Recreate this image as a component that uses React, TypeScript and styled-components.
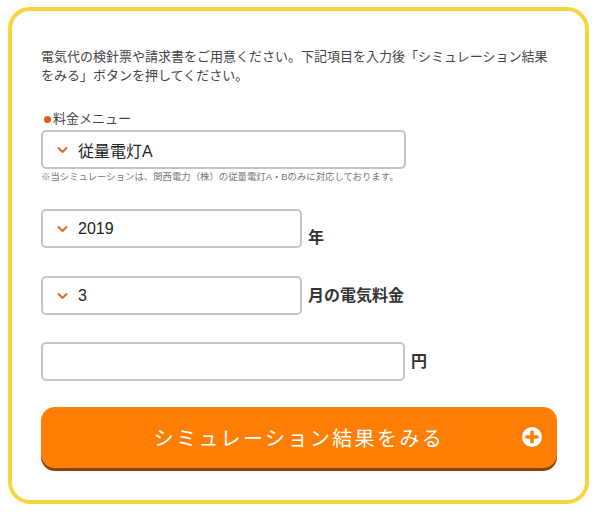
import styled, { createGlobalStyle } from 'styled-components';

const GlobalStyle = createGlobalStyle`
  html, body {
    margin: 0;
    padding: 0;
    background: #ffffff;
  }
  body {
    font-family: "Liberation Sans", "Noto Sans CJK JP", sans-serif;
    color: #333333;
  }
`;

const Frame = styled.div`
  box-sizing: border-box;
  width: 581px;
  height: 497px;
  margin: 7px 0 0 8px;
  padding: 36px 32px 0 29px;
  border: 4px solid #f6d63c;
  border-radius: 22px;
  background: #ffffff;
`;

const Intro = styled.p`
  margin: 0;
  font-size: 13px;
  line-height: 19px;
  color: #444444;
`;

const Label = styled.div`
  margin-top: 26px;
  display: flex;
  align-items: center;
  font-size: 13px;
  line-height: 16px;
  color: #444444;

  &::before {
    content: '';
    width: 7px;
    height: 7px;
    margin: 0 2px 0 3px;
    border-radius: 50%;
    background: #e8541a;
  }
`;

const Row = styled.div<{ $gap: number; $align: string }>`
  display: flex;
  align-items: ${({ $align }) => $align};
  gap: 6px;
  margin-top: ${({ $gap }) => $gap}px;
`;

const Field = styled.div<{ $width: number }>`
  box-sizing: border-box;
  width: ${({ $width }) => $width}px;
  height: 39px;
  display: flex;
  align-items: center;
  padding-left: 14px;
  border: 2px solid #c4c4c4;
  border-radius: 5px;
  background: #ffffff;
  font-size: 16px;
  color: #222222;
`;

const Chevron = styled.svg`
  width: 11px;
  height: 8px;
  margin-right: 10px;
  flex-shrink: 0;
`;

const Unit = styled.span<{ $pad?: number }>`
  font-size: 16px;
  font-weight: bold;
  color: #333333;
  padding-bottom: ${({ $pad }) => $pad || 0}px;
  line-height: 18px;
`;

const Note = styled.div`
  margin-top: 1px;
  font-size: 9.4px;
  line-height: 13px;
  color: #777777;
  white-space: nowrap;
`;

const Button = styled.button`
  position: relative;
  box-sizing: border-box;
  display: flex;
  align-items: center;
  justify-content: center;
  width: 516px;
  height: 61px;
  margin-top: 26px;
  padding: 0;
  border: none;
  border-radius: 14px;
  background: #ff7f06;
  box-shadow: 0 3px 0 #8f4206;
  color: #ffffff;
  font-family: "Noto Sans CJK JP", sans-serif;
  font-size: 20px;
  letter-spacing: 2.4px;
  cursor: pointer;
`;

const PlusIcon = styled.svg`
  position: absolute;
  right: 15px;
  top: 20px;
  width: 20px;
  height: 20px;
`;

function SelectField({ width, value }: { width: number; value: string }) {
  return (
    <Field $width={width}>
      <Chevron viewBox="0 0 11 8">
        <path d="M1.5 2 L5.5 6 L9.5 2" fill="none" stroke="#e26a2c" strokeWidth="2" strokeLinecap="round" strokeLinejoin="round" />
      </Chevron>
      {value}
    </Field>
  );
}

export default function App() {
  return (
    <>
      <GlobalStyle />
      <Frame>
        <Intro>
          電気代の検針票や請求書をご用意ください。下記項目を入力後「シミュレーション結果をみる」ボタンを押してください。
        </Intro>
        <Label>料金メニュー</Label>
        <Row $gap={3} $align="center">
          <SelectField width={365} value="従量電灯A" />
        </Row>
        <Note>※当シミュレーションは、関西電力（株）の従量電灯A・Bのみに対応しております。</Note>
        <Row $gap={26} $align="flex-end">
          <SelectField width={261} value="2019" />
          <Unit $pad={1}>年</Unit>
        </Row>
        <Row $gap={28} $align="center">
          <SelectField width={261} value="3" />
          <Unit>月の電気料金</Unit>
        </Row>
        <Row $gap={27} $align="center">
          <Field $width={364} />
          <Unit>円</Unit>
        </Row>
        <Button type="button">
          シミュレーション結果をみる
          <PlusIcon viewBox="0 0 20 20">
            <circle cx="10" cy="10" r="10" fill="#ffffff" />
            <path d="M10 5 V15 M5 10 H15" stroke="#ff7f06" strokeWidth="3.6" strokeLinecap="round" />
          </PlusIcon>
        </Button>
      </Frame>
    </>
  );
}
